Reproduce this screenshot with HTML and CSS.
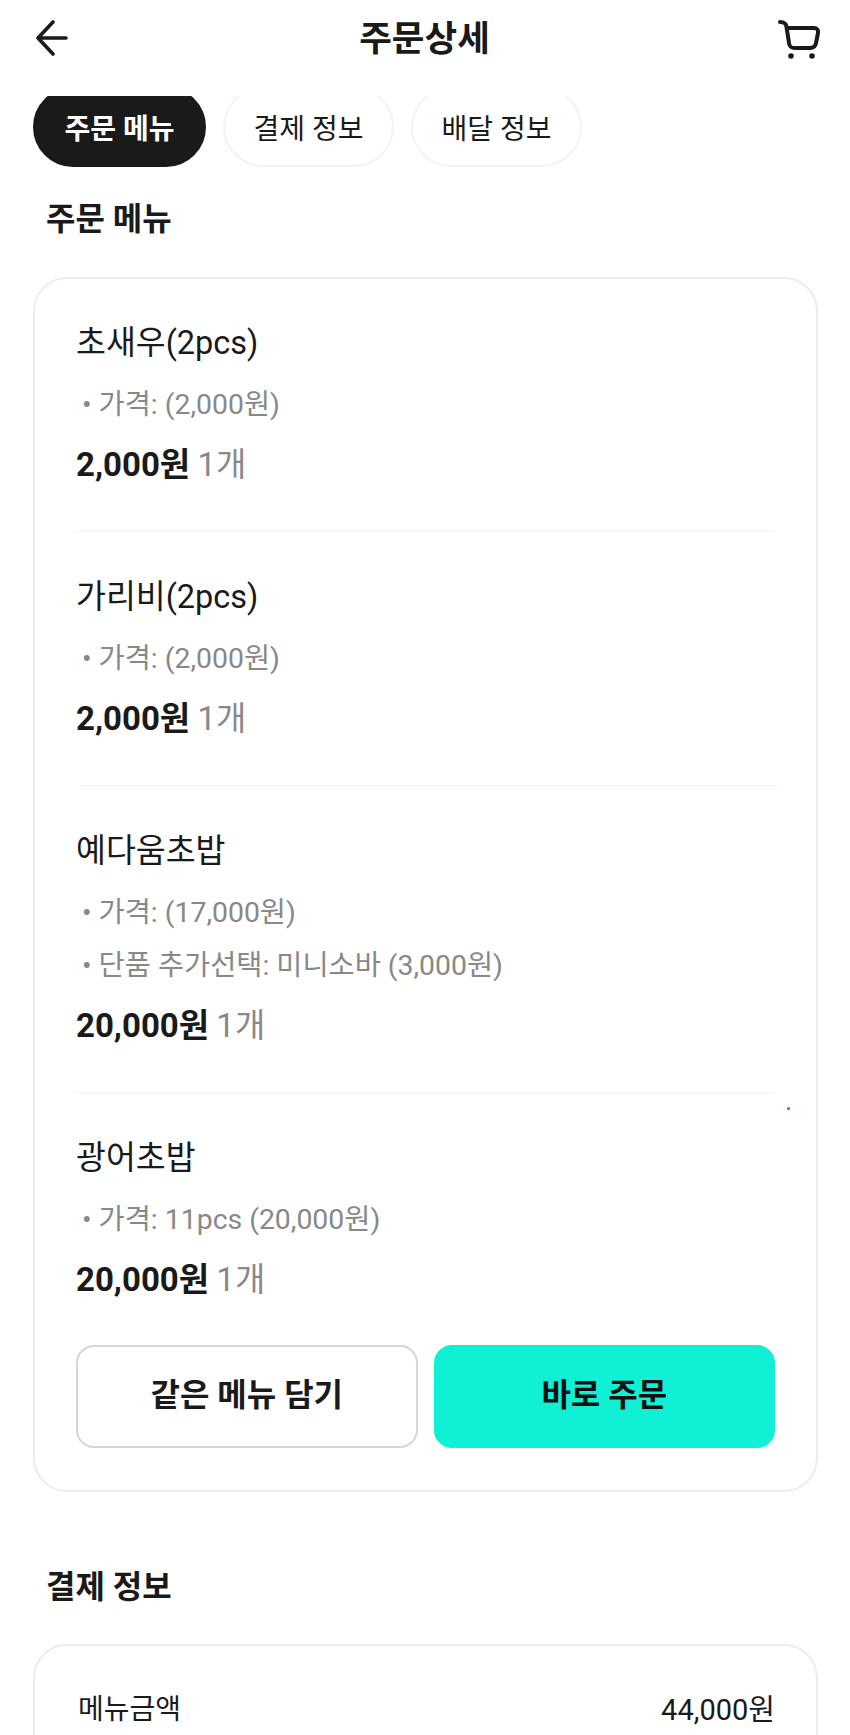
FILE: index.html
```html
<!DOCTYPE html>
<html lang="ko">
<head>
    <meta charset="UTF-8">
    <meta name="viewport" content="width=device-width, initial-scale=1.0">
    <title>주문상세</title>
    <link rel="stylesheet" href="styles.css">
</head>
<body>
    <div id="parent">
        <!-- 헤더 -->
        <div class="top_bar">
            <svg class="top_back" width="36" height="36" viewBox="0 0 36 36" fill="none" stroke="#1a1a1a" stroke-width="3.600" stroke-linecap="round" stroke-linejoin="round">
                <path d="M18 2 L3 18 L18 34 M3 18 H31"/>
            </svg>
            <div class="top_title">주문상세</div>
            <svg class="top_cart" width="42" height="42" viewBox="0 0 42 42" fill="none" stroke="#1a1a1a" stroke-width="4" stroke-linecap="round" stroke-linejoin="round">
                <path d="M2 3 C6 3 8 4 8.500 8 L11 24 C11.500 28 13 29 17 29 H32 C36 29 37.500 27 38 24 L40 14 C40.500 11 39 9 36 9 H9"/>
                <circle cx="13" cy="37" r="2.800" fill="#1a1a1a" stroke="none"/>
                <circle cx="34" cy="37" r="2.800" fill="#1a1a1a" stroke="none"/>
            </svg>
        </div>
        <!-- 탭 -->
        <div class="tabs">
            <div class="tab tab_on">주문 메뉴</div>
            <div class="tab">결제 정보</div>
            <div class="tab tab_last">배달 정보</div>
        </div>

        <div class="sec_title">주문 메뉴</div>
        <div class="card">
            <div class="item">
                <div class="item_name">초새우(2pcs)</div>
                <div class="item_opt">• 가격: (2,000원)</div>
                <div class="item_price"><b>2,000원</b> <span>1개</span></div>
            </div>
            <div class="item_line"></div>
            <div class="item">
                <div class="item_name">가리비(2pcs)</div>
                <div class="item_opt">• 가격: (2,000원)</div>
                <div class="item_price"><b>2,000원</b> <span>1개</span></div>
            </div>
            <div class="item_line item_line2"></div>
            <div class="item">
                <div class="item_name">예다움초밥</div>
                <div class="item_opt">• 가격: (17,000원)</div>
                <div class="item_opt">• 단품 추가선택: 미니소바 (3,000원)</div>
                <div class="item_price"><b>20,000원</b> <span>1개</span></div>
            </div>
            <div class="item_line"></div>
            <div class="item">
                <div class="item_name">광어초밥</div>
                <div class="item_opt">• 가격: 11pcs (20,000원)</div>
                <div class="item_price"><b>20,000원</b> <span>1개</span></div>
            </div>
            <div class="btns">
                <div class="btn">같은 메뉴 담기</div>
                <div class="btn btn_on">바로 주문</div>
            </div>
        </div>

        <div class="sec_title sec_title2">결제 정보</div>
        <div class="card card2">
            <div class="pay_row">
                <span>메뉴금액</span>
                <span>44,000원</span>
            </div>
        </div>
        <div class="red_dot"></div>
    </div>
</body>
</html>
```

FILE: styles.css
```css
html,body{
    margin: 0;
    padding: 0;
    background-color: #fff;
}
#parent{
    position: relative;
    width: 850px;
    height: 1735px;
    overflow: hidden;
    font-family: Roboto, "Noto Sans CJK KR", sans-serif;
    color: #1a1a1a;
}
.top_bar{
    display: flex;
    align-items: center;
    justify-content: space-between;
    height: 76px;
    padding: 0 30px 0 35px;
}
.top_cart{
    margin-top: 4px;
}
.top_title{
    font-size: 35.500px;
    font-weight: 700;
    line-height: 78px;
    height: 76px;
}
.tabs{
    display: flex;
    gap: 16px;
    height: 71px;
    margin: 20px 0 32px;
    padding-left: 33px;
    overflow: hidden;
}
.tab{
    display: flex;
    align-items: center;
    justify-content: center;
    box-sizing: border-box;
    width: 171px;
    height: 80px;
    margin-top: -9px;
    border: 2px solid #f3f3f3;
    border-radius: 40px;
    font-size: 28px;
}
.tab_on{
    width: 173px;
    margin-right: 1px;
    background-color: #1a1a1a;
    border-color: #1a1a1a;
    color: #fff;
    font-weight: 700;
}
.tab_last{
    margin-left: 1px;
}
.sec_title{
    height: 40px;
    line-height: 40px;
    margin: 0 0 38px 46px;
    font-size: 32px;
    font-weight: 700;
}
.sec_title2{
    margin-top: 75px;
    margin-bottom: 37px;
}
.card{
    box-sizing: border-box;
    width: 785px;
    margin-left: 33px;
    padding: 42px 41px 42px;
    border: 2px solid #ececec;
    border-radius: 34px;
}
.card2{
    padding-top: 44px;
    padding-bottom: 200px;
}
.item_name{
    height: 44px;
    line-height: 44px;
    font-size: 32.500px;
}
.item_opt{
    height: 53px;
    line-height: 53px;
    font-size: 28.400px;
    color: #888;
    padding-left: 6px;
}
.item_name + .item_opt{
    margin-top: 13px;
}
.item_price{
    height: 44px;
    line-height: 46px;
    margin-top: 11px;
    font-size: 33px;
}
.item_price b{
    font-weight: 700;
}
.item_price span{
    color: #888;
    margin-left: -1px;
}
.item_line{
    height: 1px;
    margin: 45px 0 43px;
    background-color: #f2f2f2;
}
.item_line2{
    margin-left: 4px;
    margin-right: -4px;
}
.btns{
    display: flex;
    gap: 16px;
    margin-top: 44px;
}
.btn{
    display: flex;
    align-items: center;
    justify-content: center;
    box-sizing: border-box;
    flex: 1;
    height: 103px;
    border: 2px solid #d6d6d6;
    border-radius: 18px;
    font-size: 32px;
    font-weight: 700;
    padding-bottom: 9px;
}
.btn_on{
    background-color: #0ff0d4;
    border-color: #0ff0d4;
    color: #111;
}
.pay_row{
    display: flex;
    justify-content: space-between;
    padding-left: 2px;
    font-size: 28px;
    line-height: 40px;
}
.pay_row span:last-child{
    font-size: 29px;
}
.red_dot{
    position: absolute;
    left: 787px;
    top: 1107px;
    width: 3px;
    height: 3px;
    border-radius: 50%;
    background-color: #e8304a;
}
```
